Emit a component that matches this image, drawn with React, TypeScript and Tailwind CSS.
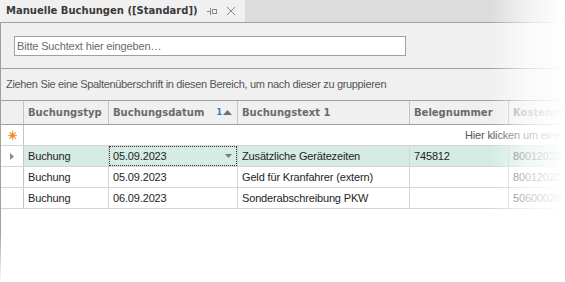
import React from "react";

const rows = [
  { typ: "Buchung", datum: "05.09.2023", text: "Zusätzliche Gerätezeiten", beleg: "745812", kst: "80012020", focused: true },
  { typ: "Buchung", datum: "05.09.2023", text: "Geld für Kranfahrer (extern)", beleg: "", kst: "80012020", focused: false },
  { typ: "Buchung", datum: "06.09.2023", text: "Sonderabschreibung PKW", beleg: "", kst: "50600020", focused: false },
];

const cols = "grid grid-cols-[23px_85px_129px_172px_99px_200px]";

function Star() {
  return (
    <svg width="9" height="9" viewBox="0 0 9 9">
      <g stroke="#f5a04a" strokeWidth="1.2" strokeLinecap="round">
        <line x1="4.5" y1="0.5" x2="4.5" y2="8.5" />
        <line x1="0.5" y1="4.5" x2="8.5" y2="4.5" />
        <line x1="1.6" y1="1.6" x2="7.4" y2="7.4" />
        <line x1="7.4" y1="1.6" x2="1.6" y2="7.4" />
      </g>
      <circle cx="4.5" cy="4.5" r="2.2" fill="#f28a1e" />
    </svg>
  );
}

export default function App() {
  return (
    <div className="relative w-[565px] h-[282px] overflow-hidden bg-white font-['Liberation_Sans',Arial,sans-serif] text-[11px] tracking-[-0.15px] text-[#1e1e1e]">
      {/* tab bar */}
      <div className="flex h-[23px] bg-[#dcdcdc] border-b border-[#a0a0a0]">
        <div className="flex items-center w-[245px] bg-[#f0f0f0] pl-[6px]">
          <span className="font-['DejaVu_Sans',sans-serif] font-bold text-[10px] tracking-normal text-[#3a3a3a] leading-none">
            Manuelle Buchungen ([Standard])
          </span>
          <svg className="ml-[9px]" width="11" height="9" viewBox="0 0 11 9">
            <g stroke="#8a8a8a" strokeWidth="1" fill="none">
              <line x1="0" y1="4.5" x2="3" y2="4.5" />
              <line x1="3.5" y1="1" x2="3.5" y2="8" />
              <rect x="5.5" y="2.5" width="4" height="4" />
            </g>
          </svg>
          <svg className="ml-[8px]" width="10" height="10" viewBox="0 0 10 10">
            <g stroke="#8a8a8a" strokeWidth="1">
              <line x1="1" y1="1" x2="9" y2="9" />
              <line x1="9" y1="1" x2="1" y2="9" />
            </g>
          </svg>
        </div>
      </div>

      {/* body with left border */}
      <div className="border-l border-[#a0a0a0] h-[259px]">
        {/* search panel */}
        <div className="h-[46px] bg-[#f0f0f0] border-b border-[#a0a0a0] pt-[13px] pl-[13px]">
          <div className="w-[392px] h-[20px] bg-white border border-[#a0a0a0] flex items-center pl-[2px] text-[#6a6a6a]">
            Bitte Suchtext hier eingeben…
          </div>
        </div>

        {/* group panel */}
        <div className="h-[32px] bg-[#f0f0f0] border-b border-[#a0a0a0] flex items-center pl-[5px] text-[#555] tracking-[-0.33px]">
          Ziehen Sie eine Spaltenüberschrift in diesen Bereich, um nach dieser zu gruppieren
        </div>

        {/* grid header */}
        <div className={`${cols} h-[24px] bg-[#f0f0f0] border-b border-[#a0a0a0] font-['DejaVu_Sans',sans-serif] font-bold text-[10px] tracking-normal text-[#6b6b6b]`}>
          <div className="border-r border-[#c4c4c4]" />
          <div className="border-r border-[#c4c4c4] flex items-center pl-[4px]">Buchungstyp</div>
          <div className="border-r border-[#c4c4c4] flex items-center pl-[4px]">
            <span>Buchungsdatum</span>
            <span className="ml-auto mr-[5px] flex items-center">
              <span className="text-[8px] text-[#3f72c0] mr-[1px] leading-none">1</span>
              <svg width="9" height="5" viewBox="0 0 9 5">
                <polygon points="0,5 9,5 4.5,0" fill="#707070" />
              </svg>
            </span>
          </div>
          <div className="border-r border-[#c4c4c4] flex items-center pl-[4px]">Buchungstext 1</div>
          <div className="border-r border-[#c4c4c4] flex items-center pl-[4px]">Belegnummer</div>
          <div className="flex items-center pl-[4px] text-[#9a9a9a] whitespace-nowrap">Kostenstelle</div>
        </div>

        {/* new item row */}
        <div className="flex h-[21px] border-b border-[#d4d4d4]">
          <div className="w-[23px] shrink-0 border-r border-[#c4c4c4] flex items-center justify-center">
            <Star />
          </div>
          <div className="flex items-center pl-[441px] text-[#555] whitespace-nowrap">
            Hier klicken um eine neue Zeile hinzuzufügen
          </div>
        </div>

        {/* data rows */}
        {rows.map((r, i) => (
          <div key={i} className={`${cols} h-[21px] border-b border-[#d4d4d4]`}>
            <div className="border-r border-[#c4c4c4] flex items-center justify-center bg-white">
              {r.focused && (
                <svg width="4" height="7" viewBox="0 0 4 7">
                  <polygon points="0,0 4,3.5 0,7" fill="#8a8a8a" />
                </svg>
              )}
            </div>
            <div className={`border-r border-[#d4d4d4] flex items-center pl-[4px] ${r.focused ? "bg-[#d5ebe3]" : ""}`}>
              {r.typ}
            </div>
            <div className={`border-r border-[#d4d4d4] ${r.focused ? "bg-[#d5ebe3]" : ""}`}>
              {r.focused ? (
                <div className="h-full border border-dotted border-[#333] flex items-center pl-[3px] pr-[4px]">
                  <span>{r.datum}</span>
                  <svg className="ml-auto" width="7" height="4" viewBox="0 0 7 4">
                    <polygon points="0,0 7,0 3.5,4" fill="#7a7a7a" />
                  </svg>
                </div>
              ) : (
                <div className="h-full flex items-center pl-[4px]">{r.datum}</div>
              )}
            </div>
            <div className={`border-r border-[#d4d4d4] flex items-center pl-[4px] whitespace-nowrap ${r.focused ? "bg-[#d5ebe3]" : ""}`}>
              {r.text}
            </div>
            <div className={`border-r border-[#d4d4d4] flex items-center pl-[4px] ${r.focused ? "bg-[#d5ebe3]" : ""}`}>
              {r.beleg}
            </div>
            <div className={`flex items-center pl-[4px] text-[#555] ${r.focused ? "bg-[#d5ebe3]" : ""}`}>
              {r.kst}
            </div>
          </div>
        ))}
      </div>

      {/* fades */}
      <div className="pointer-events-none absolute top-0 right-0 h-full w-[75px] bg-gradient-to-r from-white/0 via-white/65 to-white" />
      <div className="pointer-events-none absolute bottom-0 left-0 w-full h-[50px] bg-gradient-to-b from-white/0 to-white" />
    </div>
  );
}
